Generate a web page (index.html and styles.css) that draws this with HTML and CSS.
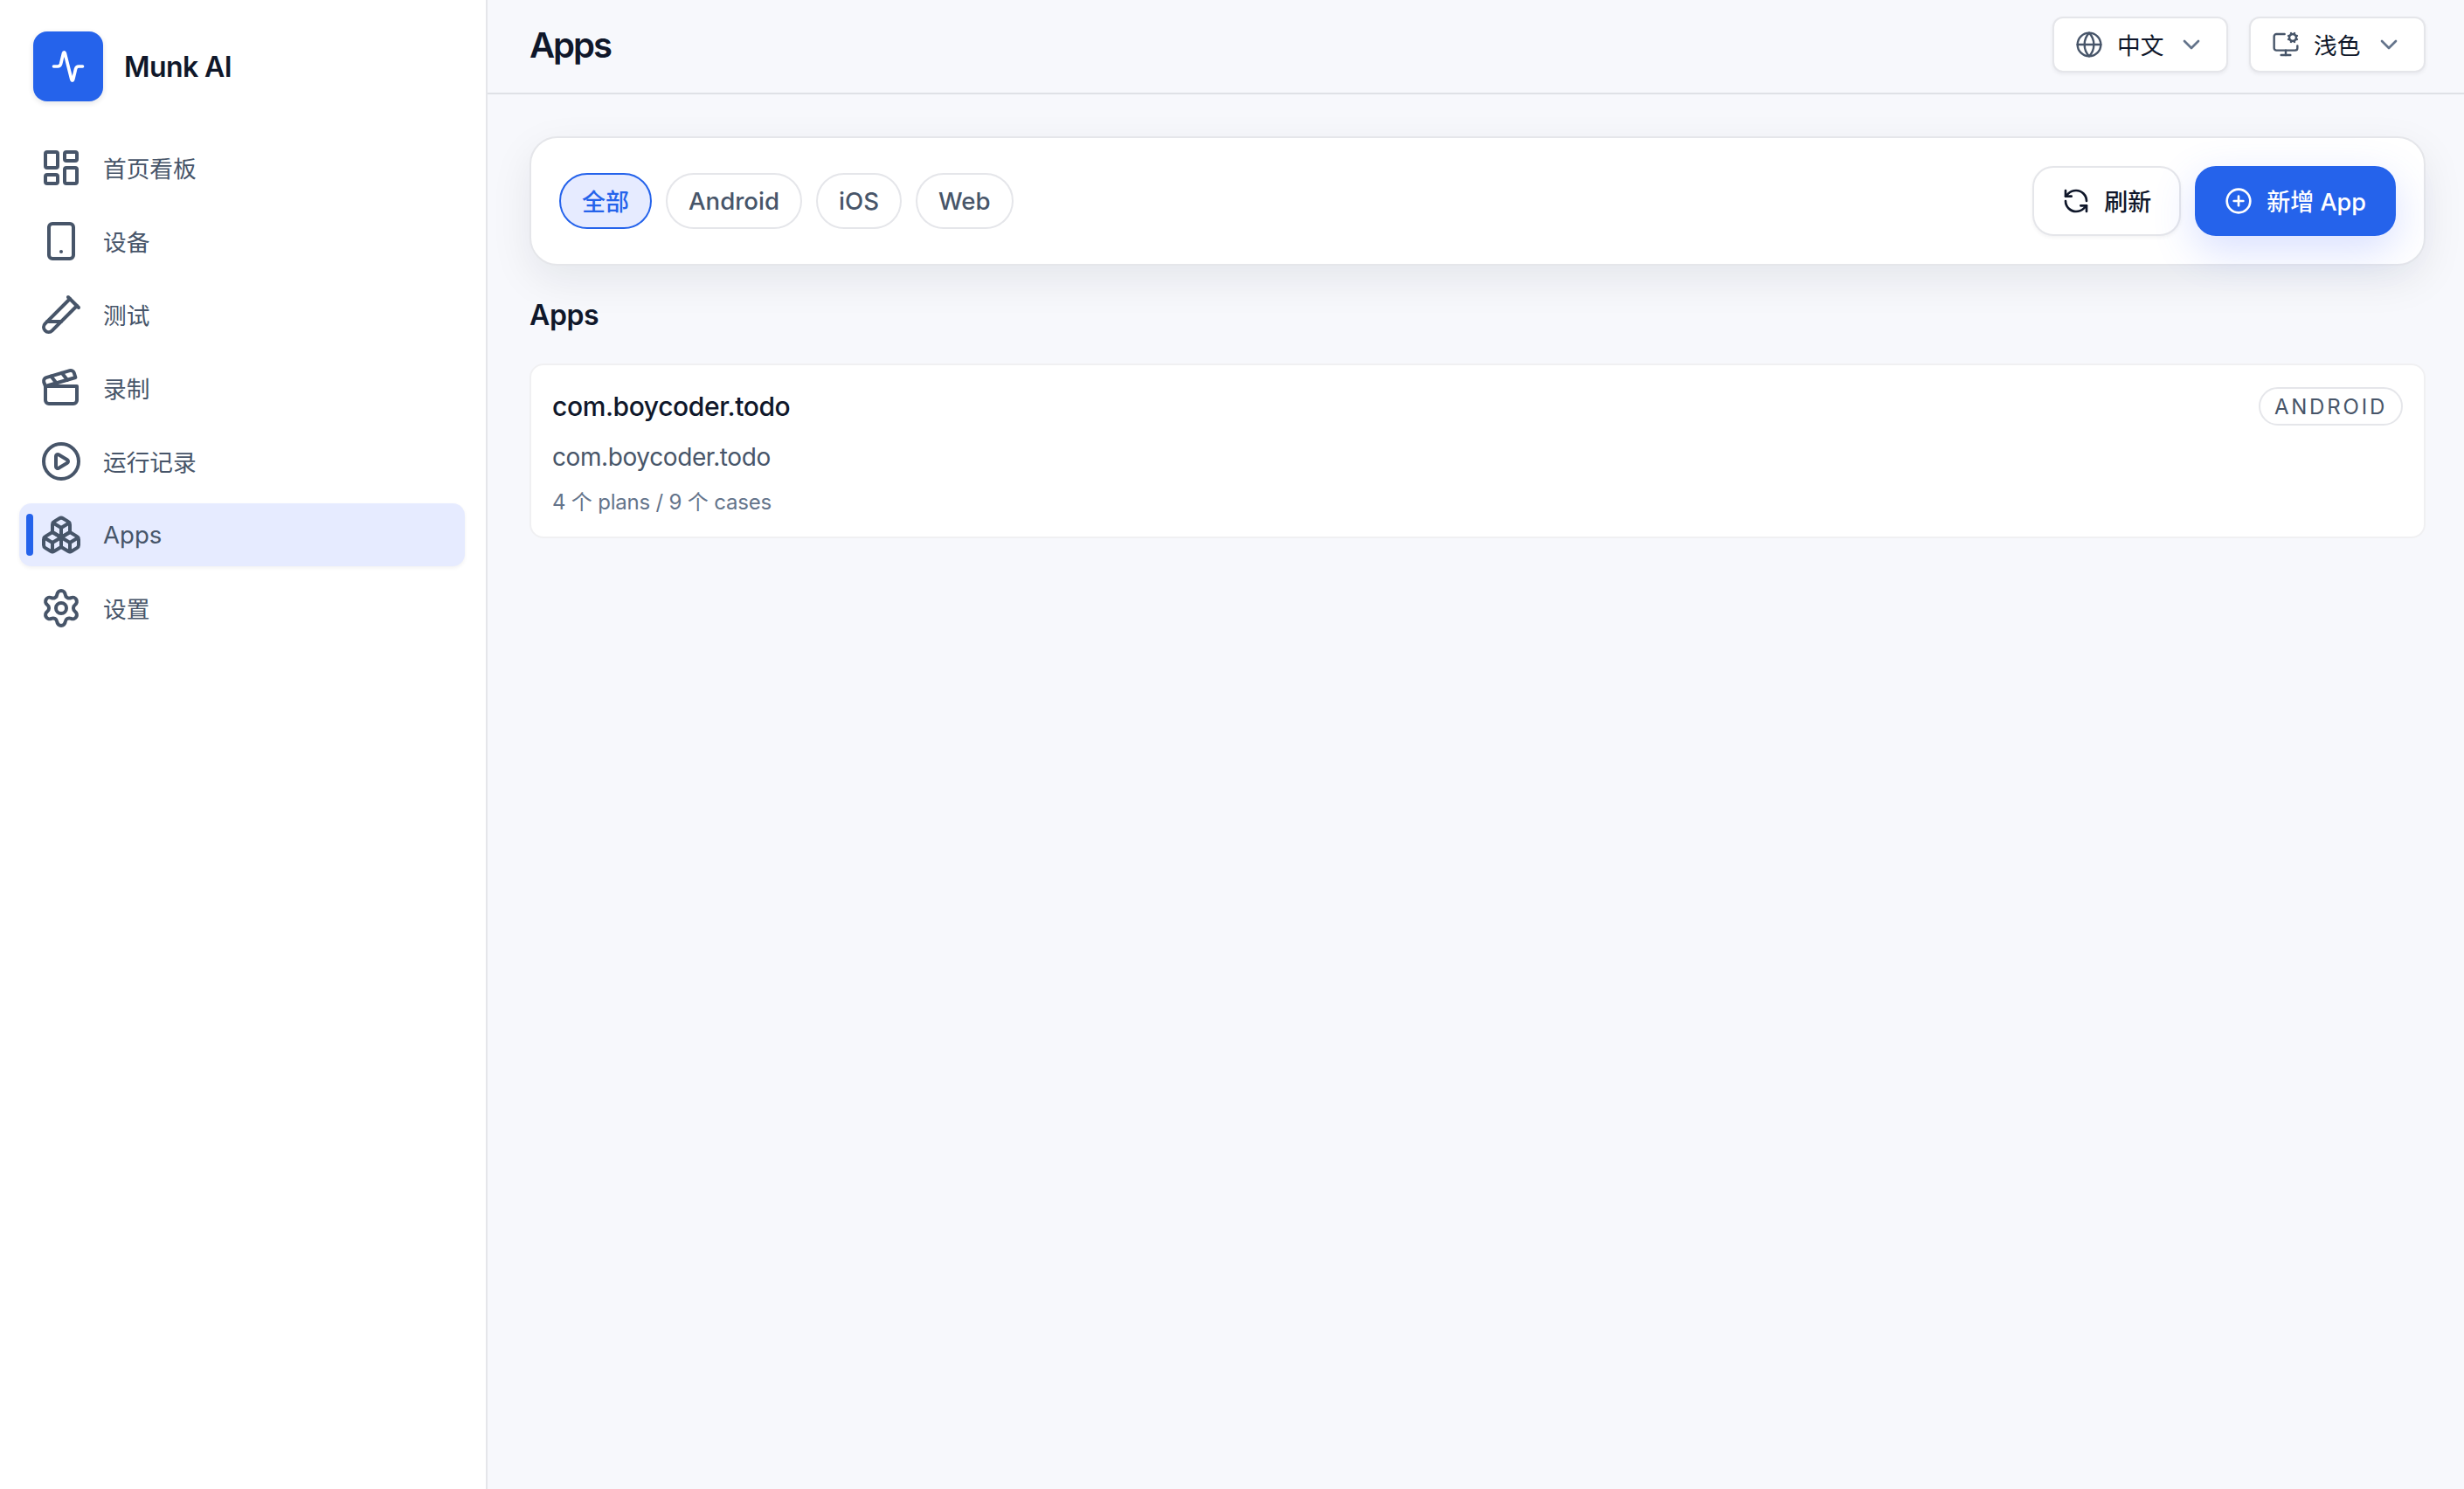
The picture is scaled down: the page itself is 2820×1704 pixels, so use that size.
FILE: index.html
```html
<!doctype html>
<html lang="zh-CN">
<head>
  <meta charset="utf-8">
  <title>Munk AI</title>
  <link rel="stylesheet" href="styles.css">
</head>
<body>
  <div class="layout">
    <aside class="sidebar">
      <div class="brand">
        <div class="brand-logo">
          <svg class="icon" viewBox="0 0 24 24"><path d="M3 12h2.500c1 0 1.600-.5 1.900-1.500L9 3.800c.15-.8.85-.8 1 0l4.100 16.400c.15.8.85.8 1 0l1.600-6.700c.3-1 .9-1.500 1.900-1.500H21"/></svg>
        </div>
        <span class="brand-name">Munk AI</span>
      </div>
      <nav class="nav">
        <a class="nav-item">
          <svg class="icon" viewBox="0 0 24 24"><rect x="3" y="3" width="7" height="9" rx="1"/><rect x="14" y="3" width="7" height="5" rx="1"/><rect x="14" y="12" width="7" height="9" rx="1"/><rect x="3" y="16" width="7" height="5" rx="1"/></svg>
          <span>首页看板</span>
        </a>
        <a class="nav-item">
          <svg class="icon" viewBox="0 0 24 24"><rect x="5" y="2" width="14" height="20" rx="2"/><path d="M12 18h.01"/></svg>
          <span>设备</span>
        </a>
        <a class="nav-item">
          <svg class="icon" viewBox="0 0 24 24"><path d="M21 7 6.820 21.180a2.830 2.830 0 0 1-3.990-.01a2.830 2.830 0 0 1 0-4L17 3"/><path d="m16 2 6 6"/><path d="M12 16H4"/></svg>
          <span>测试</span>
        </a>
        <a class="nav-item">
          <svg class="icon" viewBox="0 0 24 24"><path d="M20.200 6 3 11l-.9-2.400c-.3-1.100.3-2.200 1.300-2.500l13.500-4c1.100-.3 2.200.3 2.500 1.300Z"/><path d="m6.200 5.300 3.100 3.900"/><path d="m12.400 3.400 3.100 4"/><path d="M3 11h18v8a2 2 0 0 1-2 2H5a2 2 0 0 1-2-2Z"/></svg>
          <span>录制</span>
        </a>
        <a class="nav-item">
          <svg class="icon" viewBox="0 0 24 24"><circle cx="12" cy="12" r="10"/><path d="M9 9.003a1 1 0 0 1 1.517-.859l4.997 2.997a1 1 0 0 1 0 1.718l-4.997 2.997A1 1 0 0 1 9 14.996z"/></svg>
          <span>运行记录</span>
        </a>
        <a class="nav-item active">
          <svg class="icon" viewBox="0 0 24 24"><path d="M2.970 12.920A2 2 0 0 0 2 14.630v3.240a2 2 0 0 0 .970 1.710l3 1.800a2 2 0 0 0 2.060 0L12 19v-5.500l-5-3-4.030 2.420Z"/><path d="m7 16.500-4.740-2.850"/><path d="m7 16.500 5-3"/><path d="M7 16.500v5.170"/><path d="M12 13.500V19l3.970 2.380a2 2 0 0 0 2.060 0l3-1.800a2 2 0 0 0 .970-1.710v-3.240a2 2 0 0 0-.970-1.710L17 10.500l-5 3Z"/><path d="m17 16.500-5-3"/><path d="m17 16.500 4.740-2.850"/><path d="M17 16.500v5.170"/><path d="M7.970 4.420A2 2 0 0 0 7 6.130v4.370l5 3 5-3V6.130a2 2 0 0 0-.970-1.710l-3-1.800a2 2 0 0 0-2.060 0l-3 1.800Z"/><path d="M12 8 7.260 5.150"/><path d="m12 8 4.740-2.850"/><path d="M12 13.500V8"/></svg>
          <span class="latin">Apps</span>
        </a>
        <a class="nav-item">
          <svg class="icon" viewBox="0 0 24 24"><path d="M9.671 4.136a2.340 2.340 0 0 1 4.659 0 2.340 2.340 0 0 0 3.319 1.915 2.340 2.340 0 0 1 2.330 4.033 2.340 2.340 0 0 0 0 3.831 2.340 2.340 0 0 1-2.330 4.033 2.340 2.340 0 0 0-3.319 1.915 2.340 2.340 0 0 1-4.659 0 2.340 2.340 0 0 0-3.320-1.915 2.340 2.340 0 0 1-2.330-4.033 2.340 2.340 0 0 0 0-3.831A2.340 2.340 0 0 1 6.350 6.051a2.340 2.340 0 0 0 3.319-1.915"/><circle cx="12" cy="12" r="3"/></svg>
          <span>设置</span>
        </a>
      </nav>
    </aside>

    <div class="page">
      <header class="topbar">
        <h1 class="title">Apps</h1>
        <div class="selects">
          <button class="select select-lang">
            <svg class="icon" viewBox="0 0 24 24"><circle cx="12" cy="12" r="10"/><path d="M12 2a14.500 14.500 0 0 0 0 20 14.500 14.500 0 0 0 0-20"/><path d="M2 12h20"/></svg>
            <span>中文</span>
            <svg class="icon chevron" viewBox="0 0 24 24"><path d="m6 9 6 6 6-6"/></svg>
          </button>
          <button class="select">
            <svg class="icon" viewBox="0 0 24 24"><path d="M12 17v4"/><path d="m14.305 7.530.923-.382"/><path d="m15.228 4.852-.923-.383"/><path d="m16.852 3.228-.383-.924"/><path d="m16.852 8.772-.383.923"/><path d="m19.148 3.228.383-.924"/><path d="m19.530 9.696-.382-.924"/><path d="m20.772 4.852.924-.383"/><path d="m20.772 7.148.924.383"/><path d="M22 13v2a2 2 0 0 1-2 2H4a2 2 0 0 1-2-2V5a2 2 0 0 1 2-2h7"/><path d="M8 21h8"/><circle cx="18" cy="6" r="3"/></svg>
            <span>浅色</span>
            <svg class="icon chevron" viewBox="0 0 24 24"><path d="m6 9 6 6 6-6"/></svg>
          </button>
        </div>
      </header>

      <main class="content">
        <section class="toolbar">
          <div class="chips">
            <button class="chip active"><span>全部</span></button>
            <button class="chip latin">Android</button>
            <button class="chip latin">iOS</button>
            <button class="chip latin">Web</button>
          </div>
          <div class="actions">
            <button class="btn">
              <svg class="icon" viewBox="0 0 24 24"><path d="M21 12a9 9 0 0 0-9-9 9.750 9.750 0 0 0-6.740 2.740L3 8"/><path d="M3 3v5h5"/><path d="M3 12a9 9 0 0 0 9 9 9.750 9.750 0 0 0 6.740-2.740L21 16"/><path d="M16 16h5v5"/></svg>
              <span>刷新</span>
            </button>
            <button class="btn btn-primary">
              <svg class="icon" viewBox="0 0 24 24"><circle cx="12" cy="12" r="10"/><path d="M8 12h8"/><path d="M12 8v8"/></svg>
              <span>新增 App</span>
            </button>
          </div>
        </section>

        <h2 class="section-title">Apps</h2>

        <article class="app-card">
          <div class="app-info">
            <div class="app-name">com.boycoder.todo</div>
            <div class="app-id">com.boycoder.todo</div>
            <div class="app-meta">4 个 plans / 9 个 cases</div>
          </div>
          <span class="tag">ANDROID</span>
        </article>
      </main>
    </div>
  </div>
</body>
</html>
```
FILE: styles.css
```css
* {
  box-sizing: border-box;
}

body {
  margin: 0;
  background: #f7f8fc;
  color: #0f172a;
  font-family: Inter, "Noto Sans CJK SC", sans-serif;
  font-size: 27px;
}

h1, h2 {
  margin: 0;
  font-weight: 600;
}

button {
  font: inherit;
  color: inherit;
}

.layout {
  display: flex;
  height: 1704px;
}

.icon {
  flex: none;
  width: 32px;
  height: 32px;
  fill: none;
  stroke: currentColor;
  stroke-width: 2;
  stroke-linecap: round;
  stroke-linejoin: round;
}

/* sidebar */
.sidebar {
  flex: none;
  width: 558px;
  padding: 36px 24px 0 22px;
  background: #fff;
  border-right: 2px solid #e5e6ea;
}

.brand {
  display: flex;
  align-items: center;
  gap: 24px;
  height: 80px;
  padding-left: 16px;
}

.brand-logo {
  display: flex;
  align-items: center;
  justify-content: center;
  width: 80px;
  height: 80px;
  border-radius: 16px;
  background: #2563eb;
  color: #fff;
  box-shadow: 0 2px 6px rgba(15, 23, 42, 0.12);
}

.brand-logo .icon {
  width: 44px;
  height: 44px;
}

.brand-name {
  font-size: 32px;
  font-weight: 600;
  letter-spacing: -0.6px;
}

.nav {
  display: flex;
  flex-direction: column;
  gap: 12px;
  margin-top: 40px;
}

.nav-item {
  position: relative;
  display: flex;
  align-items: center;
  gap: 24px;
  height: 72px;
  padding-left: 24px;
  border-radius: 14px;
  color: #475569;
}

.nav-item span {
  padding-bottom: 2px;
  font-size: 26.7px;
}

.nav-item .latin {
  padding-bottom: 0;
  font-size: 27.6px;
}

.nav-item .icon {
  width: 48px;
  height: 48px;
}

.nav-item.active {
  background: #e6ebff;
  box-shadow: 0 2px 4px rgba(15, 23, 42, 0.06);
}

.nav-item.active::before {
  content: "";
  position: absolute;
  left: 8px;
  top: 12px;
  width: 8px;
  height: 48px;
  border-radius: 4px;
  background: #2563eb;
}

/* top bar */
.page {
  flex: 1;
}

.topbar {
  display: flex;
  align-items: center;
  justify-content: space-between;
  height: 108px;
  padding: 0 44px 4px 48px;
  border-bottom: 2px solid #dfe1e6;
}

.title {
  font-size: 40px;
  letter-spacing: -2px;
}

.selects {
  display: flex;
  gap: 24px;
}

.select {
  display: flex;
  align-items: center;
  width: 202px;
  height: 64px;
  padding: 0 24px;
  border: 2px solid #e5e6ea;
  border-radius: 12px;
  background: #fff;
  box-shadow: 0 2px 4px rgba(15, 23, 42, 0.06);
}

.select-lang {
  width: 201px;
}

.select .icon {
  color: #475569;
  stroke-width: 1.8;
}

.select span {
  margin-left: 16px;
  padding-bottom: 2px;
  font-size: 26.7px;
}

.select .chevron {
  margin-left: auto;
  color: #64748b;
  stroke-width: 2;
}

/* content */
.content {
  padding: 48px 44px 0 48px;
}

.toolbar {
  display: flex;
  align-items: center;
  justify-content: space-between;
  height: 148px;
  padding: 0 32px;
  border: 2px solid #e5e6ea;
  border-radius: 32px;
  background: #fff;
  box-shadow: 0 16px 48px rgba(15, 23, 42, 0.08);
}

.chips,
.actions {
  display: flex;
  gap: 16px;
}

.chip {
  display: flex;
  align-items: center;
  height: 64px;
  padding: 0 24px;
  border: 2px solid #e5e6ea;
  border-radius: 32px;
  background: #fff;
  color: #475569;
  font-weight: 500;
}

.chip span {
  padding-bottom: 2px;
}

.chip.latin {
  font-size: 27.6px;
}

.chip.active {
  border-color: #2563eb;
  background: #e6ebff;
  color: #2563eb;
}

.btn {
  display: flex;
  align-items: center;
  gap: 16px;
  height: 80px;
  padding: 0 32px;
  border: 2px solid #e5e6ea;
  border-radius: 24px;
  background: #fff;
  font-weight: 500;
  box-shadow: 0 2px 4px rgba(15, 23, 42, 0.05);
}

.btn span {
  padding-bottom: 2px;
}

.btn-primary {
  border-color: #2563eb;
  background: #2563eb;
  color: #fff;
  box-shadow: 0 16px 48px rgba(79, 110, 255, 0.22);
}

.section-title {
  margin-top: 35px;
  font-size: 32px;
  line-height: 44px;
  letter-spacing: -0.4px;
}

.app-card {
  display: flex;
  align-items: flex-start;
  justify-content: space-between;
  height: 200px;
  margin-top: 33px;
  padding: 24px;
  border: 2px solid #f0f0f2;
  border-radius: 16px;
  background: #fff;
}

.app-name {
  font-size: 30px;
  font-weight: 500;
  line-height: 46px;
  letter-spacing: -0.4px;
}

.app-id {
  margin-top: 13px;
  color: #475569;
  font-size: 28px;
  line-height: 44px;
  letter-spacing: -0.4px;
}

.app-meta {
  margin-top: 10px;
  color: #64748b;
  font-size: 24px;
  line-height: 40px;
  letter-spacing: -0.2px;
}

.tag {
  height: 44px;
  margin-top: 1px;
  padding: 0 16px;
  border: 2px solid #e5e6ea;
  border-radius: 22px;
  color: #475569;
  font-size: 24px;
  line-height: 41px;
  letter-spacing: 2.8px;
}
```
